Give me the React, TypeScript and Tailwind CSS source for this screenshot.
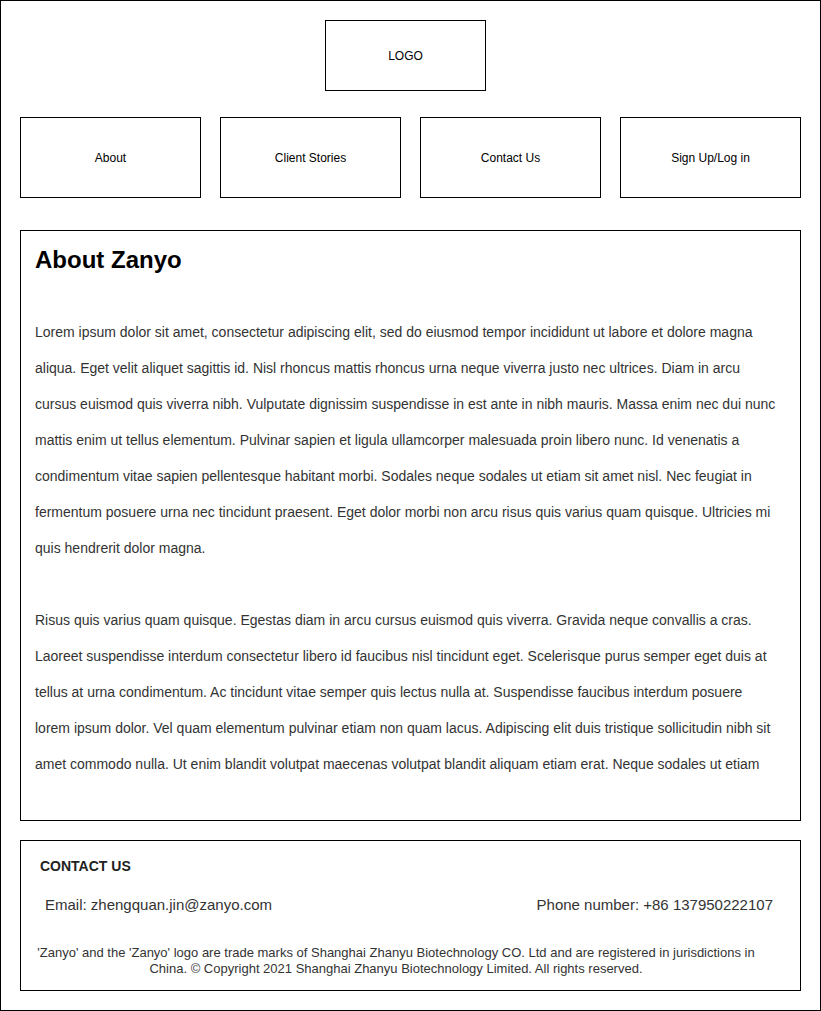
const navItems = ["About", "Client Stories", "Contact Us", "Sign Up/Log in"];

const para1 = [
  "Lorem ipsum dolor sit amet, consectetur adipiscing elit, sed do eiusmod tempor incididunt ut labore et dolore magna",
  "aliqua. Eget velit aliquet sagittis id. Nisl rhoncus mattis rhoncus urna neque viverra justo nec ultrices. Diam in arcu",
  "cursus euismod quis viverra nibh. Vulputate dignissim suspendisse in est ante in nibh mauris. Massa enim nec dui nunc",
  "mattis enim ut tellus elementum. Pulvinar sapien et ligula ullamcorper malesuada proin libero nunc. Id venenatis a",
  "condimentum vitae sapien pellentesque habitant morbi. Sodales neque sodales ut etiam sit amet nisl. Nec feugiat in",
  "fermentum posuere urna nec tincidunt praesent. Eget dolor morbi non arcu risus quis varius quam quisque. Ultricies mi",
  "quis hendrerit dolor magna.",
];

const para2 = [
  "Risus quis varius quam quisque. Egestas diam in arcu cursus euismod quis viverra. Gravida neque convallis a cras.",
  "Laoreet suspendisse interdum consectetur libero id faucibus nisl tincidunt eget. Scelerisque purus semper eget duis at",
  "tellus at urna condimentum. Ac tincidunt vitae semper quis lectus nulla at. Suspendisse faucibus interdum posuere",
  "lorem ipsum dolor. Vel quam elementum pulvinar etiam non quam lacus. Adipiscing elit duis tristique sollicitudin nibh sit",
  "amet commodo nulla. Ut enim blandit volutpat maecenas volutpat blandit aliquam etiam erat. Neque sodales ut etiam",
];

export default function App() {
  return (
    <div className="w-[821px] h-[1011px] border border-black bg-white px-[19px] font-['Liberation_Sans',Arial,sans-serif]">
      {/* logo */}
      <div className="pt-[19px] flex">
        <div className="ml-[305px] w-[161px] h-[71px] border border-black flex items-center justify-center text-[12px] text-black">
          LOGO
        </div>
      </div>

      {/* nav */}
      <div className="mt-[26px] grid grid-cols-4 gap-[19px]">
        {navItems.map((item) => (
          <div key={item} className="h-[81px] border border-black flex items-center justify-center text-[12px] text-black">
            {item}
          </div>
        ))}
      </div>

      {/* about */}
      <div className="mt-[32px] border border-black pl-[14px] pt-[15px] pb-[38px]">
        <h1 className="text-[24px] leading-[28px] font-bold text-black">About Zanyo</h1>
        <div className="mt-[40px] text-[14px] leading-[36px] text-[#333] whitespace-nowrap">
          {para1.map((l, i) => (
            <div key={i}>{l}</div>
          ))}
        </div>
        <div className="mt-[36px] text-[14px] leading-[36px] text-[#333] whitespace-nowrap">
          {para2.map((l, i) => (
            <div key={i}>{l}</div>
          ))}
        </div>
      </div>

      {/* footer */}
      <div className="mt-[19px] border border-black pt-[17px] pb-[13px]">
        <div className="pl-[19px] text-[14px] leading-[16px] font-bold text-[#222]">CONTACT US</div>
        <div className="mt-[22px] pl-[24px] pr-[27px] flex justify-between text-[15px] leading-[18px] text-[#333]">
          <span>Email: zhengquan.jin@zanyo.com</span>
          <span>Phone number: +86 137950222107</span>
        </div>
        <div className="mt-[31px] w-[750px] text-center text-[13px] leading-[16px] text-[#333]">
          'Zanyo' and the 'Zanyo' logo are trade marks of Shanghai Zhanyu Biotechnology CO. Ltd and are registered in jurisdictions in
          China. © Copyright 2021 Shanghai Zhanyu Biotechnology Limited. All rights reserved.
        </div>
      </div>
    </div>
  );
}
